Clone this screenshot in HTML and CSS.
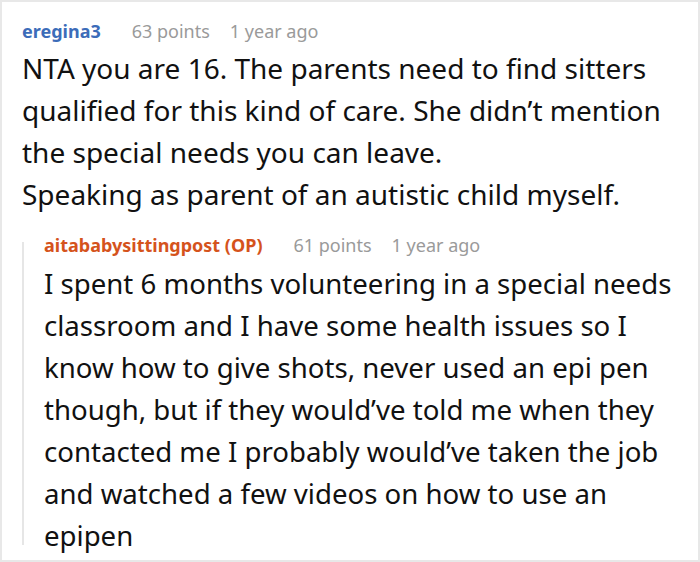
FILE: index.html
```html
<!DOCTYPE html>
<html>
<head>
<meta charset="utf-8">
<link rel="stylesheet" href="styles.css">
</head>
<body>
<div class="card">
  <div class="meta">
    <span class="user user-blue">eregina3</span>
    <span class="info">63 points</span>
    <span class="info">1 year ago</span>
  </div>
  <div class="text">NTA you are 16. The parents need to find sitters qualified for this kind of care. She didn’t mention the special needs you can leave.<br>Speaking as parent of an autistic child myself.</div>
  <div class="reply">
    <div class="meta reply-meta">
      <span class="user user-orange">aitababysittingpost (OP)</span>
      <span class="info">61 points</span>
      <span class="info">1 year ago</span>
    </div>
    <div class="text reply-text">I spent 6 months volunteering in a special needs classroom and I have some health issues so I know how to give shots, never used an epi pen though, but if they would’ve told me when they contacted me I probably would’ve taken the job and watched a few videos on how to use an epipen</div>
  </div>
</div>
</body>
</html>
```

FILE: styles.css
```css
html, body {
  margin: 0;
  padding: 0;
  background: #ffffff;
}
body {
  font-family: "Noto Sans", "Open Sans", sans-serif;
}
.card {
  box-sizing: border-box;
  width: 700px;
  height: 562px;
  border: 2px solid #e8e8e8;
  padding: 16px 6px 0 20px;
  overflow: hidden;
}
.meta {
  display: flex;
  align-items: center;
  gap: 20px;
  font-size: 18px;
  line-height: 26px;
  height: 26px;
  margin-bottom: 3px;
  white-space: nowrap;
}
.user {
  font-weight: 700;
  margin-right: 11px;
}
.user-blue {
  color: #3c6cb9;
}
.user-orange {
  color: #d5531c;
}
.info {
  color: #9a9a9a;
}
.text {
  font-size: 28px;
  line-height: 42px;
  color: #111111;
}
.reply-text {
  font-size: 27.6px;
}
.reply {
  position: relative;
  margin-top: 23px;
  padding-left: 22px;
}
.reply::before {
  content: "";
  position: absolute;
  left: 0;
  top: 4px;
  bottom: 11px;
  width: 2px;
  background: #e6e6e6;
}
.reply-meta {
  height: 14px;
  line-height: 14px;
  margin-bottom: 10px;
}
```
